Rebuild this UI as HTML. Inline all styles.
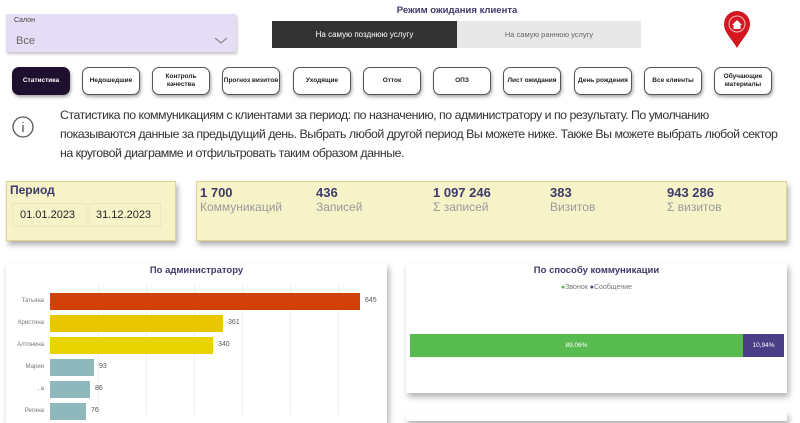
<!DOCTYPE html>
<html><head><meta charset="utf-8"><style>
*{margin:0;padding:0;box-sizing:border-box}
body{width:800px;height:414px;overflow:hidden;background:#fff;font-family:"Liberation Sans","Noto Sans CJK SC",sans-serif;position:relative;color:#222}
.a{position:absolute}
.btn{position:absolute;top:67px;width:58px;height:28px;border:1px solid #555;border-radius:7px;background:#fff;box-shadow:1px 2px 3px rgba(0,0,0,.35);font-size:6.5px;font-weight:bold;display:flex;align-items:center;justify-content:center;text-align:center;line-height:8px;color:#222}
.yb{background:#f6f3c8;border:1px solid #ddd690;box-shadow:2px 4px 5px rgba(0,0,0,.3)}
.card{background:#fff;box-shadow:2px 4px 6px rgba(0,0,0,.3)}
.kn{font-size:13px;font-weight:bold;color:#3e3a6a}
.kl{font-size:12px;color:#9a9a9a}
.lbl{position:absolute;font-size:6px;color:#777;width:40px;text-align:right}
.val{position:absolute;font-size:7px;color:#555}
.bar{position:absolute;left:50px;height:17px}
.grid{position:absolute;top:285px;height:129px;width:1px;background:#eee}
</style></head><body>
<div class="a" style="left:6px;top:14px;width:230px;height:38px;background:#e5dcf5;box-shadow:1px 2px 3px rgba(0,0,0,.25)"></div>
<div class="a" style="left:14px;top:17px;font-size:7px;color:#444">Салон</div>
<div class="a" style="left:16px;top:35px;font-size:11px;color:#666">Все</div>
<svg class="a" style="left:214px;top:37px" width="14" height="8"><path d="M1 1L7 6L13 1" fill="none" stroke="#777" stroke-width="1"/></svg>
<div class="a" style="left:272px;top:5px;width:370px;text-align:center;font-size:9.5px;font-weight:bold;color:#3e3a6a">Режим ожидания клиента</div>
<div class="a" style="left:272px;top:21px;width:185px;height:27px;background:#333;color:#fff;font-size:8px;display:flex;align-items:center;justify-content:center">На самую позднюю услугу</div>
<div class="a" style="left:457px;top:21px;width:184px;height:27px;background:#e8e8e8;color:#666;font-size:7.5px;display:flex;align-items:center;justify-content:center">На самую раннюю услугу</div>
<svg class="a" style="left:722px;top:10px" width="30" height="40" viewBox="0 0 30 40"><path d="M15 38C9 28 2 22 2 14A13 13 0 0 1 28 14C28 22 21 28 15 38Z" fill="#d4161e"/><circle cx="15" cy="14" r="8" fill="none" stroke="#f5c0c0" stroke-width="1"/><path d="M10 15L15 10L20 15H18.5V19H11.5V15Z" fill="#fff"/></svg>
<div class="btn" style="left:12px;background:#1f0f2e;color:#fff;border-color:#1f0f2e">Статистика</div>
<div class="btn" style="left:82px">Недошедшие</div>
<div class="btn" style="left:152px">Контроль<br>качества</div>
<div class="btn" style="left:222px">Прогноз визитов</div>
<div class="btn" style="left:293px">Уходящие</div>
<div class="btn" style="left:363px">Отток</div>
<div class="btn" style="left:433px">ОПЗ</div>
<div class="btn" style="left:503px">Лист ожидания</div>
<div class="btn" style="left:574px">День рождения</div>
<div class="btn" style="left:644px">Все клиенты</div>
<div class="btn" style="left:714px">Обучающие<br>материалы</div>
<svg class="a" style="left:11px;top:115px" width="24" height="24"><circle cx="12" cy="12" r="10" fill="none" stroke="#555" stroke-width="1.3"/><path d="M12 10V17M12 7V8" stroke="#555" stroke-width="1.3"/></svg>
<div class="a" style="left:60px;top:106px;width:740px;font-size:12.4px;line-height:19px;color:#333;letter-spacing:-0.5px">Статистика по коммуникациям с клиентами за период: по назначению, по администратору и по результату. По умолчанию<br>показываются данные за предыдущий день. Выбрать любой другой период Вы можете ниже. Также Вы можете выбрать любой сектор<br>на круговой диаграмме и отфильтровать таким образом данные.</div>
<div class="a yb" style="left:6px;top:181px;width:170px;height:60px"></div>
<div class="a" style="left:10px;top:183px;font-size:12px;font-weight:bold;color:#3e3a6a">Период</div>
<div class="a" style="left:12px;top:203px;width:75px;height:24px;border:1px solid #ece8b8"></div>
<div class="a" style="left:89px;top:203px;width:72px;height:24px;border:1px solid #ece8b8"></div>
<div class="a" style="left:20px;top:209px;font-size:11px;color:#222">01.01.2023</div>
<div class="a" style="left:96px;top:209px;font-size:11px;color:#222">31.12.2023</div>
<div class="a yb" style="left:196px;top:181px;width:591px;height:60px"></div>
<div class="a" style="left:200px;top:185px"><div class="kn">1 700</div><div class="kl">Коммуникаций</div></div>
<div class="a" style="left:316px;top:185px"><div class="kn">436</div><div class="kl">Записей</div></div>
<div class="a" style="left:433px;top:185px"><div class="kn">1 097 246</div><div class="kl">Σ записей</div></div>
<div class="a" style="left:550px;top:185px"><div class="kn">383</div><div class="kl">Визитов</div></div>
<div class="a" style="left:667px;top:185px"><div class="kn">943 286</div><div class="kl">Σ визитов</div></div>
<div class="a card" style="left:6px;top:263px;width:381px;height:160px"></div>
<div class="a" style="left:6px;top:265px;width:381px;text-align:center;font-size:9.5px;font-weight:bold;color:#3e3a6a">По администратору</div>
<div class="grid" style="left:98px"></div><div class="grid" style="left:146px"></div><div class="grid" style="left:194px"></div><div class="grid" style="left:242px"></div><div class="grid" style="left:290px"></div><div class="grid" style="left:338px"></div>
<div class="bar" style="top:293px;width:310px;background:#d2400a"></div>
<div class="bar" style="top:315px;width:173px;background:#e8c600"></div>
<div class="bar" style="top:337px;width:163px;background:#e8d300"></div>
<div class="bar" style="top:359px;width:44px;background:#8fb8bd"></div>
<div class="bar" style="top:381px;width:40px;background:#8fb8bd"></div>
<div class="bar" style="top:403px;width:36px;background:#8fb8bd"></div>
<div class="lbl" style="top:298px;left:4px">Татьяна</div>
<div class="lbl" style="top:320px;left:4px">Кристина</div>
<div class="lbl" style="top:342px;left:4px">Алтонина</div>
<div class="lbl" style="top:364px;left:4px">Мария</div>
<div class="lbl" style="top:386px;left:4px">,  а</div>
<div class="lbl" style="top:408px;left:4px">Регина</div>
<div class="val" style="left:365px;top:297px">645</div>
<div class="val" style="left:228px;top:319px">361</div>
<div class="val" style="left:218px;top:341px">340</div>
<div class="val" style="left:99px;top:363px">93</div>
<div class="val" style="left:95px;top:385px">86</div>
<div class="val" style="left:91px;top:407px">76</div>
<div class="a card" style="left:406px;top:263px;width:381px;height:130px"></div>
<div class="a card" style="left:406px;top:411px;width:381px;height:10px"></div>
<div class="a" style="left:406px;top:265px;width:381px;text-align:center;font-size:9.5px;font-weight:bold;color:#3e3a6a">По способу коммуникации</div>
<div class="a" style="left:406px;top:284px;width:381px;text-align:center;font-size:7px;color:#777"><span style="color:#55bb50">●</span>Звонок <span style="color:#4a3e86">●</span>Сообщение</div>
<div class="a" style="left:410px;top:334px;width:333px;height:23px;background:#58bb50;color:#fff;font-size:6.5px;display:flex;align-items:center;justify-content:center">89,06%</div>
<div class="a" style="left:743px;top:334px;width:41px;height:23px;background:#4a3e86;color:#fff;font-size:6.5px;display:flex;align-items:center;justify-content:center">10,94%</div>
</body></html>
